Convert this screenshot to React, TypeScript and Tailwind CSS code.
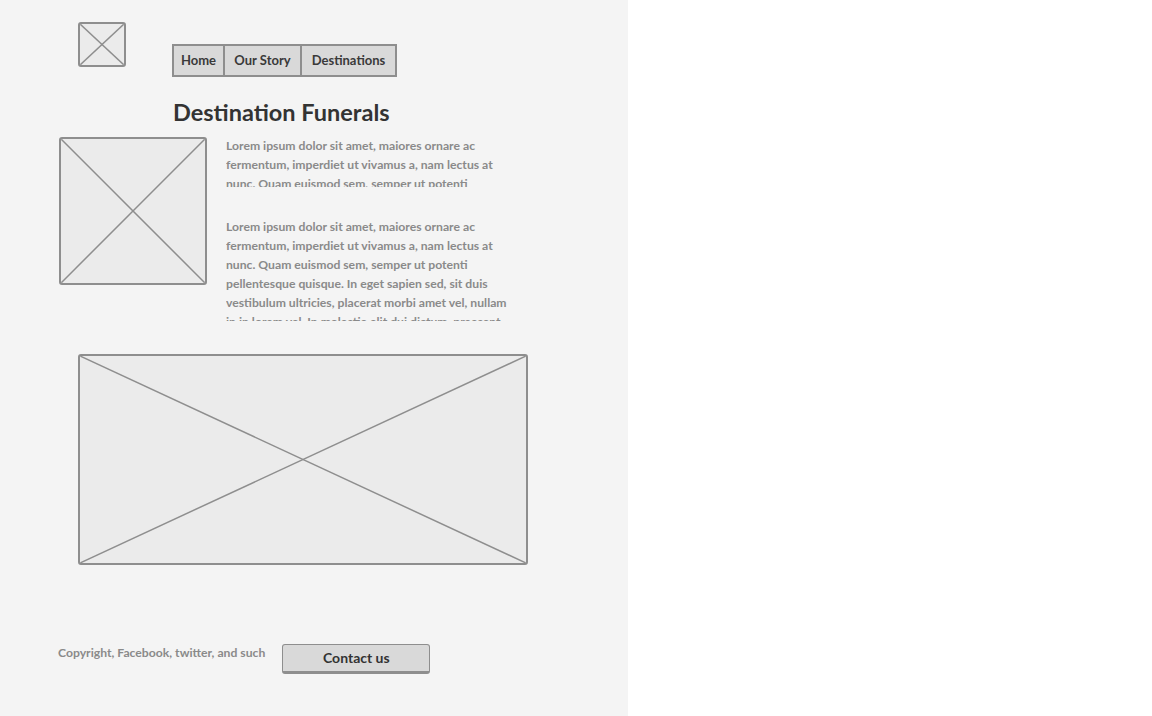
import React from "react";

const lorem =
  "Lorem ipsum dolor sit amet, maiores ornare ac fermentum, imperdiet ut vivamus a, nam lectus at nunc. Quam euismod sem, semper ut potenti pellentesque quisque. In eget sapien sed, sit duis vestibulum ultricies, placerat morbi amet vel, nullam in in lorem vel. In molestie elit dui dictum, praesent nascetur pulvinar sed, in dolor pede in aliquam.";

function Placeholder({ className }: { className: string }) {
  return (
    <div
      className={`relative rounded-[3px] border-2 border-[#8e8e8e] bg-[#ebebeb] overflow-hidden ${className}`}
    >
      <svg
        className="absolute inset-0 w-full h-full"
        viewBox="0 0 100 100"
        preserveAspectRatio="none"
      >
        <line x1="0" y1="0" x2="100" y2="100" stroke="#8e8e8e" strokeWidth="1.5" vectorEffect="non-scaling-stroke" />
        <line x1="100" y1="0" x2="0" y2="100" stroke="#8e8e8e" strokeWidth="1.5" vectorEffect="non-scaling-stroke" />
      </svg>
    </div>
  );
}

const navItems = ["Home", "Our Story", "Destinations"];

export default function App() {
  return (
    <div
      className="flex min-h-[716px] bg-white"
      style={{ fontFamily: "Lato, 'Open Sans', sans-serif" }}
    >
      <div className="w-[628px] h-[716px] bg-[#f4f4f4] flex flex-col">
        {/* header */}
        <div className="flex items-start pt-[22px] pl-[78px]">
          <Placeholder className="w-[48px] h-[45px]" />
          <nav className="flex ml-[46px] mt-[22px] h-[33px] border-2 border-[#8e8e8e] bg-[#d9d9d9]">
            {navItems.map((item, idx) => (
              <div
                key={item}
                className={`flex items-center justify-center text-[13px] font-bold text-[#3a3a3a] ${
                  idx === 0 ? "w-[49px]" : idx === 1 ? "w-[77px] border-l-2 border-[#8e8e8e]" : "w-[95px] border-l-2 border-[#8e8e8e]"
                }`}
              >
                {item}
              </div>
            ))}
          </nav>
        </div>

        <h1 className="pl-[173px] mt-[21px] text-[23.5px] leading-[28px] font-bold text-[#333]">
          Destination Funerals
        </h1>

        {/* intro */}
        <div className="flex mt-[11px] pl-[59px]">
          <Placeholder className="w-[148px] h-[148px] shrink-0" />
          <div className="ml-[19px] w-[290px] text-[12.2px] leading-[19px] font-bold text-[#8a8a8a]">
            <p className="h-[51px] overflow-hidden -mt-[1px]">{lorem}</p>
            <p className="h-[104px] overflow-hidden mt-[30px]">{lorem}</p>
          </div>
        </div>

        <Placeholder className="ml-[78px] mt-[33px] w-[450px] h-[211px]" />

        {/* footer */}
        <div className="flex items-start mt-[79px] pl-[58px]">
          <p className="text-[12.2px] font-bold text-[#8a8a8a]">
            Copyright, Facebook, twitter, and such
          </p>
          <button
            type="button"
            className="ml-[17px] w-[148px] h-[30px] rounded-[3px] border border-[#8e8e8e] border-b-[3px] bg-[#d9d9d9] text-[14px] font-bold text-[#333] leading-none"
          >
            Contact us
          </button>
        </div>
      </div>
      <div className="flex-1" />
    </div>
  );
}
